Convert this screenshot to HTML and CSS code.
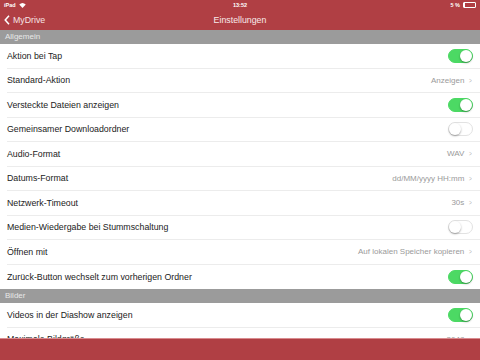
FILE: index.html
```html
<!DOCTYPE html>
<html lang="de">
<head>
    <meta charset="UTF-8">
    <meta name="viewport" content="width=device-width, initial-scale=1.0">
    <title>Einstellungen</title>
    <link rel="stylesheet" href="styles.css">
</head>
<body>
  <div class="top">
    <div class="status">
      <div class="status-left">iPad
        <svg class="wifi" width="7" height="5" viewBox="0 0 14 10"><path d="M7 10 L0.5 3.2 A9.5 9.5 0 0 1 13.5 3.2 Z" fill="#fff"/></svg>
      </div>
      <div class="status-time">13:52</div>
      <div class="status-right">5 %
        <span class="battery"><span class="battery-level"></span></span>
      </div>
    </div>
    <div class="nav">
      <div class="back">
        <svg width="6" height="10" viewBox="0 0 6 10"><path d="M5 0.8 L1.2 5 L5 9.2" fill="none" stroke="#fff" stroke-width="1.5"/></svg>
        MyDrive
      </div>
      <div class="title">Einstellungen</div>
    </div>
  </div>

  <div class="section">Allgemein</div>
  <div class="row"><span>Aktion bei Tap</span><span class="switch on"></span></div>
  <div class="row"><span>Standard-Aktion</span><span class="value">Anzeigen <i class="chev">&gt;</i></span></div>
  <div class="row"><span>Versteckte Dateien anzeigen</span><span class="switch on"></span></div>
  <div class="row"><span>Gemeinsamer Downloadordner</span><span class="switch"></span></div>
  <div class="row"><span>Audio-Format</span><span class="value">WAV <i class="chev">&gt;</i></span></div>
  <div class="row"><span>Datums-Format</span><span class="value">dd/MM/yyyy HH:mm <i class="chev">&gt;</i></span></div>
  <div class="row"><span>Netzwerk-Timeout</span><span class="value">30s <i class="chev">&gt;</i></span></div>
  <div class="row"><span>Medien-Wiedergabe bei Stummschaltung</span><span class="switch"></span></div>
  <div class="row"><span>Öffnen mit</span><span class="value">Auf lokalen Speicher kopieren <i class="chev">&gt;</i></span></div>
  <div class="row last"><span>Zurück-Button wechselt zum vorherigen Ordner</span><span class="switch on"></span></div>
  <div class="section">Bilder</div>
  <div class="row"><span>Videos in der Diashow anzeigen</span><span class="switch on"></span></div>
  <div class="row"><span>Maximale Bildgröße</span><span class="value">2048 <i class="chev">&gt;</i></span></div>

  <div class="toolbar"></div>
</body>
</html>
```

FILE: styles.css
```css
body {
    margin: 0;
    height: 360px;
    overflow: hidden;
    background: #fff;
    font-family: "Liberation Sans", Arial, sans-serif;
    color: #222;
}

.top {
    background-color: #b03f44;
    color: #fff;
    height: 30px;
}

.status {
    height: 10px;
    display: flex;
    justify-content: space-between;
    align-items: center;
    padding: 0 4px;
    font-size: 5.5px;
    font-weight: bold;
}
.status-left, .status-right {
    width: 60px;
    display: flex;
    align-items: center;
    gap: 3px;
}
.status-right {
    justify-content: flex-end;
}
.battery {
    display: inline-block;
    width: 11px;
    height: 4px;
    border: 0.8px solid #fff;
    border-radius: 1px;
}
.battery-level {
    display: block;
    width: 1px;
    height: 100%;
    background: #fff;
}

.nav {
    height: 20px;
    display: flex;
    align-items: center;
    position: relative;
    font-size: 8.8px;
}
.back {
    display: flex;
    align-items: center;
    gap: 3px;
    padding-left: 4px;
    color: #f6e4e5;
}
.title {
    position: absolute;
    left: 0;
    right: 0;
    text-align: center;
    font-size: 8.8px;
    color: #f8eaea;
}

.section {
    background-color: #9b9b9b;
    color: #e8e8e8;
    height: 14px;
    line-height: 14px;
    font-size: 8px;
    padding-left: 5px;
}

.row {
    box-sizing: border-box;
    height: 24.5px;
    margin-left: 7px;
    padding-right: 7px;
    display: flex;
    justify-content: space-between;
    align-items: center;
    border-bottom: 0.6px solid #ececec;
    font-size: 8.8px;
}
.row.last {
    border-bottom: none;
}

.value {
    color: #9a9a9a;
    font-size: 8px;
    display: flex;
    align-items: center;
    gap: 4px;
}
.chev {
    font-style: normal;
    color: #b5b5b5;
    transform: scaleX(0.6);
    font-size: 8px;
}

.switch {
    width: 25px;
    height: 14px;
    border-radius: 8px;
    box-sizing: border-box;
    border: 1px solid #e2e2e2;
    background: #fff;
    position: relative;
}
.switch::after {
    content: "";
    position: absolute;
    top: 0;
    left: 0;
    width: 12px;
    height: 12px;
    border-radius: 50%;
    background: #fff;
    box-shadow: 0 1px 2px rgba(0, 0, 0, 0.35);
}
.switch.on {
    background: #4cd964;
    border-color: #4cd964;
}
.switch.on::after {
    left: 11px;
}

.toolbar {
    position: fixed;
    left: 0;
    right: 0;
    bottom: 0;
    height: 21px;
    background-color: #b03f44;
    border-top: 1px solid #d98b8f;
}
```
